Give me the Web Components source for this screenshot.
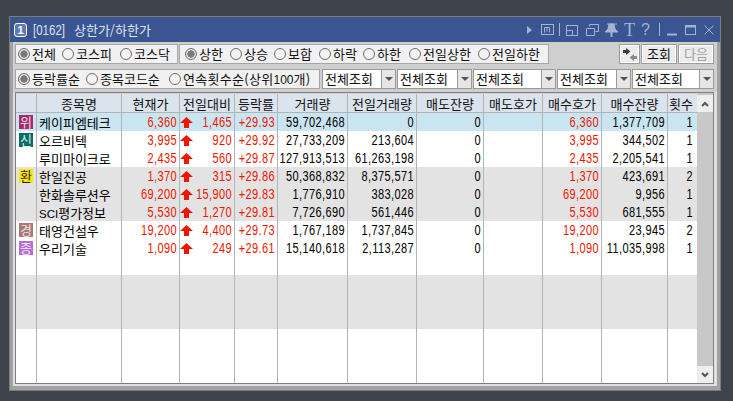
<!DOCTYPE html>
<html lang="ko"><head><meta charset="utf-8"><title>상한가/하한가</title>
<style>
html,body{margin:0;padding:0;height:100%;overflow:hidden;background:#3e434c;}
body{padding:16px 0 0 9px;box-sizing:border-box;font:13px "Noto Sans CJK KR",sans-serif;color:#000;}
.row{display:flex;}
.r1{height:20px;margin-bottom:5px;gap:1px;}
.r2{height:20px;margin-bottom:3px;gap:1px;}
.sp{margin-left:auto;}
</style></head><body>
<hts-window>
  <title-bar slot="title"></title-bar>
  <div class="row r1">
    <radio-group w="163" pad="2">
      <radio-item w="44" checked>전체</radio-item>
      <radio-item w="58">코스피</radio-item>
      <radio-item>코스닥</radio-item>
    </radio-group>
    <radio-group w="370" pad="5">
      <radio-item w="45" checked>상한</radio-item>
      <radio-item w="44">상승</radio-item>
      <radio-item w="45">보합</radio-item>
      <radio-item w="44">하락</radio-item>
      <radio-item w="46">하한</radio-item>
      <radio-item w="69">전일상한</radio-item>
      <radio-item>전일하한</radio-item>
    </radio-group>
    <tool-button w="21" class="sp"><svg width="14" height="13" viewBox="0 0 14 13"><path d="M0 2h3V0l4.500 3.500L3 7V5H0z" fill="#3c3c3c"/><path d="M14 8h-3V6L6.500 9.500 11 13v-2h3z" fill="#8a8a8a"/></svg></tool-button>
    <tool-button w="36">조회</tool-button>
    <tool-button w="36" disabled>다음</tool-button>
  </div>
  <div class="row r2">
    <radio-group w="305" pad="2" style="margin-right:1px">
      <radio-item w="68" checked>등락률순</radio-item>
      <radio-item w="83">종목코드순</radio-item>
      <radio-item><span style="letter-spacing:.3px">연속횟수순(상위<span style="font:12px 'Liberation Sans',sans-serif;letter-spacing:0">100</span>개)</span></radio-item>
    </radio-group>
    <combo-box w="74">전체조회</combo-box>
    <combo-box w="75">전체조회</combo-box>
    <combo-box w="83">전체조회</combo-box>
    <combo-box w="74">전체조회</combo-box>
    <combo-box w="82">전체조회</combo-box>
  </div>
  <stock-grid></stock-grid>
</hts-window>
<script>
function shadow(el,html){el.attachShadow({mode:'open'}).innerHTML=html;}
customElements.define('hts-window',class extends HTMLElement{constructor(){super();shadow(this,`<style>
:host{display:block;width:712px;height:375px;box-sizing:border-box;border:1px solid #7c7c7c;background:#a2a2a2;}
.panel{height:344px;box-sizing:border-box;margin:0 3px 0 3px;padding:2px 3px 0 2px;background:linear-gradient(#cfcfcf 0 50px,#e0e0e0 50px);}
</style><slot name="title"></slot><div class="panel"><slot></slot></div>`);}});
customElements.define('title-bar',class extends HTMLElement{constructor(){super();shadow(this,`<style>
:host{display:flex;align-items:center;height:25px;background:#3b5592;color:#dde4f0;font:13px/25px "Noto Sans CJK KR",sans-serif;}
.one{width:13px;height:14px;margin-left:4px;box-sizing:border-box;border:1px solid #fff;border-radius:3px;background:#5f7bb0;color:#fff;font:bold 11px/12px "Liberation Sans",sans-serif;text-align:center;}
.code{font:11.5px "Liberation Sans",sans-serif;margin-left:6px;color:#dde4f0;display:inline-block;transform:scaleY(1.2);}
.name{margin-left:9px;}
svg{margin-left:auto;display:block;}
text{fill:#a4b3d2;}
</style><span class="one">1</span><span class="code">[0162]</span><span class="name">상한가/하한가</span>
<svg width="197" height="25" viewBox="524 17 197 25" fill="none" stroke="#a4b3d2" stroke-width="1">
<path d="M528 26l5 4-5 4z" fill="#a4b3d2" stroke="none"/>
<rect x="542.500" y="24.500" width="12" height="10"/><path d="M545.500 32.500v-5h5v5M548 27.500v4"/>
<path d="M560.500 23v13"/>
<rect x="567.500" y="25.500" width="11" height="10"/><path d="M568 30.500h5.500v5"/>
<path d="M590.500 26.500v-2h9v7h-3M587.500 28.500h8v7h-8z"/>
<path d="M608 24h10M610 24l-1 5-3 3h13l-3-3-1-5z" fill="#a4b3d2"/><path d="M612.500 32v5" stroke-width="2"/>
<text x="625" y="36" font-size="18" stroke="none" font-family="Liberation Serif, serif">T</text>
<text x="642" y="35" font-size="16" stroke="none" font-family="Liberation Sans, sans-serif">?</text>
<path d="M660.500 23v13"/>
<path d="M668 34.500h10" stroke-width="2"/>
<rect x="686.500" y="25.500" width="10" height="9"/><path d="M686 26.500h11" stroke-width="2"/>
<path d="M705.500 25.500l9 9M714.500 25.500l-9 9"/>
</svg>`);}});
customElements.define('radio-group',class extends HTMLElement{constructor(){super();shadow(this,`<style>
:host{display:flex;align-items:center;box-sizing:border-box;height:20px;border:1px solid #a6a6a6;background:#f1f1f1;flex:none;}
</style><slot></slot>`);}
connectedCallback(){this.style.width=this.getAttribute('w')+'px';this.style.paddingLeft=this.getAttribute('pad')+'px';}});
customElements.define('radio-item',class extends HTMLElement{constructor(){super();shadow(this,`<style>
:host{display:flex;align-items:center;flex:none;gap:2px;font:13px/18px "Noto Sans CJK KR",sans-serif;white-space:nowrap;color:#111;}
i{width:12px;height:12px;box-sizing:border-box;border:1px solid #6b6b6b;border-radius:50%;background:#f4f4f4;flex:none;}
:host([checked]) i{background:radial-gradient(circle,#7a7a7a 0 3.4px,#e6e6e6 3.9px);}
</style><i></i><span><slot></slot></span>`);}
connectedCallback(){if(this.hasAttribute('w'))this.style.width=this.getAttribute('w')+'px';}});
customElements.define('tool-button',class extends HTMLElement{constructor(){super();shadow(this,`<style>
:host{display:flex;align-items:center;justify-content:center;flex:none;box-sizing:border-box;height:20px;border:1px solid #9c9c9c;box-shadow:inset 0 0 0 1px #fff;background:#ececec;font:13px/18px "Noto Sans CJK KR",sans-serif;color:#111;}
:host([disabled]){color:#a2a2a2;}
</style><slot></slot>`);}
connectedCallback(){this.style.width=this.getAttribute('w')+'px';}});
customElements.define('combo-box',class extends HTMLElement{constructor(){super();shadow(this,`<style>
:host{display:flex;flex:none;box-sizing:border-box;height:20px;border:1px solid #9a9a9a;background:#fff;font:13px/18px "Noto Sans CJK KR",sans-serif;color:#111;}
.t{flex:1;padding-left:2px;white-space:nowrap;overflow:hidden;}
.b{width:14px;flex:none;box-sizing:border-box;border-left:1px solid #9a9a9a;background:#e6e6e6;display:flex;align-items:center;justify-content:center;}
.b::after{content:"";border:4px solid transparent;border-top:4px solid #555;border-bottom:0;}
</style><span class="t"><slot></slot></span><span class="b"></span>`);}
connectedCallback(){this.style.width=this.getAttribute('w')+'px';}});

const COLS=[21,85,58,55,43,70,69,67,59,59,66,29];
const HEAD=['','종목명','현재가','전일대비','등락률','거래량','전일거래량','매도잔량','매도호가','매수호가','매수잔량','횟수'];
const DATA=[
['위','#a32a6c','#f3dbe8','케이피엠테크','6,360','1,465','+29.93','59,702,468','0','0','6,360','1,377,709','1','s'],
['신','#0d6b66','#d8f0ee','오르비텍','3,995','920','+29.92','27,733,209','213,604','0','3,995','344,502','1',''],
['','','','루미마이크로','2,435','560','+29.87','127,913,513','61,263,198','0','2,435','2,205,541','1',''],
['환','#ffe800','#222','한일진공','1,370','315','+29.86','50,368,832','8,375,571','0','1,370','423,691','2','g'],
['','','','한화솔루션우','69,200','15,900','+29.83','1,776,910','383,028','0','69,200','9,956','1','g'],
['','','','<span class="sci">SCI</span>평가정보','5,530','1,270','+29.81','7,726,690','561,446','0','5,530','681,555','1','g'],
['경','#a87878','#f0e0e0','태영건설우','19,200','4,400','+29.73','1,767,189','1,737,845','0','19,200','23,945','2',''],
['종','#b56ed2','#f6e8fb','우리기술','1,090','249','+29.61','15,140,618','2,113,287','0','1,090','11,035,998','1','']
];
const ARROW='<svg class="ar" width="13" height="11" viewBox="0 0 13 11"><path d="M6.500 0L13 6H9v5H4V6H0z" fill="#ee1600"/></svg>';
function num(t,c){return `<span class="n${c?' '+c:''}">${t}</span>`;}
customElements.define('stock-grid',class extends HTMLElement{constructor(){super();
let h=HEAD.map((t,i)=>`<div class="c h${i==11?' last':''}">${t}</div>`).join('');
let rows='';
for(let r=0;r<15;r++){
 const d=DATA[r];
 const bg=r==0?'s':(r>=3&&r<=5)||(r>=9&&r<=11)?'g':'';
 const cell=(inner,cls='')=>`<div class="c ${bg} ${cls}">${inner}</div>`;
 if(!d){for(let i=0;i<12;i++)rows+=cell('',i==11?'last':'');continue;}
 rows+=cell(d[0]?`<b class="bd" style="background:${d[1]};color:${d[2]}">${d[0]}</b>`:'','ctr');
 rows+=cell(`<span class="name">${d[3]}</span>`,'l');
 rows+=cell(num(d[4],'red'));
 rows+=cell(ARROW+num(d[5],'red'),'chg');
 rows+=cell(num(d[6],'red'));
 rows+=cell(num(d[7]));
 rows+=cell(num(d[8]));
 rows+=cell(num(d[9]));
 rows+=cell('');
 rows+=cell(num(d[10],'red'));
 rows+=cell(num(d[11]));
 rows+=cell(num(d[12]),'last');
}
shadow(this,`<style>
:host{display:flex;box-sizing:border-box;width:699px;height:292px;border:1px solid #7f7f7f;background:#fff;font:13px/17px "Noto Sans CJK KR",sans-serif;color:#000;}
.t{width:681px;display:grid;grid-template-columns:${COLS.map(c=>c+'px').join(' ')};grid-template-rows:19px repeat(15,18px);padding-top:1px;background:#d2d2d2;align-content:start;height:290px;box-sizing:border-box;}
.c{box-sizing:border-box;border-right:1px solid #b4b4b4;background:#fff;display:flex;align-items:center;justify-content:flex-end;padding-right:1px;white-space:nowrap;overflow:hidden;}
.c.last{border-right:0;padding-right:3px;}
.c.ctr{overflow:visible;}
.h{background:#dbe3ec;border-bottom:1px solid #b4b4b4;justify-content:center;padding:0;color:#111;}
.s{background:#c9e5f1;}.g{background:#e3e3e3;}
.l{justify-content:flex-start;padding-left:2px;}
.ctr{justify-content:center;padding:0;}
.chg{justify-content:space-between;padding-left:0;padding-right:2px;}
.ar{flex:none;}
.bd{width:14px;height:14px;font:normal 13px/14px "Noto Sans CJK KR",sans-serif;display:flex;align-items:center;justify-content:center;}
.n{font:11px/12px "Liberation Sans",sans-serif;letter-spacing:.4px;display:inline-block;transform:scaleY(1.25);}
.sci{font:11.500px/12px "Liberation Sans",sans-serif;}
.red{color:#ee1600;}
.c:not(.chg):not(.l):not(.ctr):not(.h) .n{margin-right:1px;}
.sb{width:16px;background:#c8c8c8;display:flex;flex-direction:column;justify-content:space-between;}
.btn{height:17px;background:#eee;display:flex;align-items:center;justify-content:center;margin-top:2px;}
.btn.d{height:17px;margin:0;}
</style><div class="t">${h}${rows}</div>
<div class="sb"><div class="btn"><svg width="8" height="6" viewBox="0 0 8 6"><path d="M1 5l3-3 3 3" fill="none" stroke="#555" stroke-width="2"/></svg></div>
<div class="btn d"><svg width="8" height="6" viewBox="0 0 8 6"><path d="M1 1l3 3 3-3" fill="none" stroke="#555" stroke-width="2"/></svg></div></div>`);}});
</script>
</body></html>
